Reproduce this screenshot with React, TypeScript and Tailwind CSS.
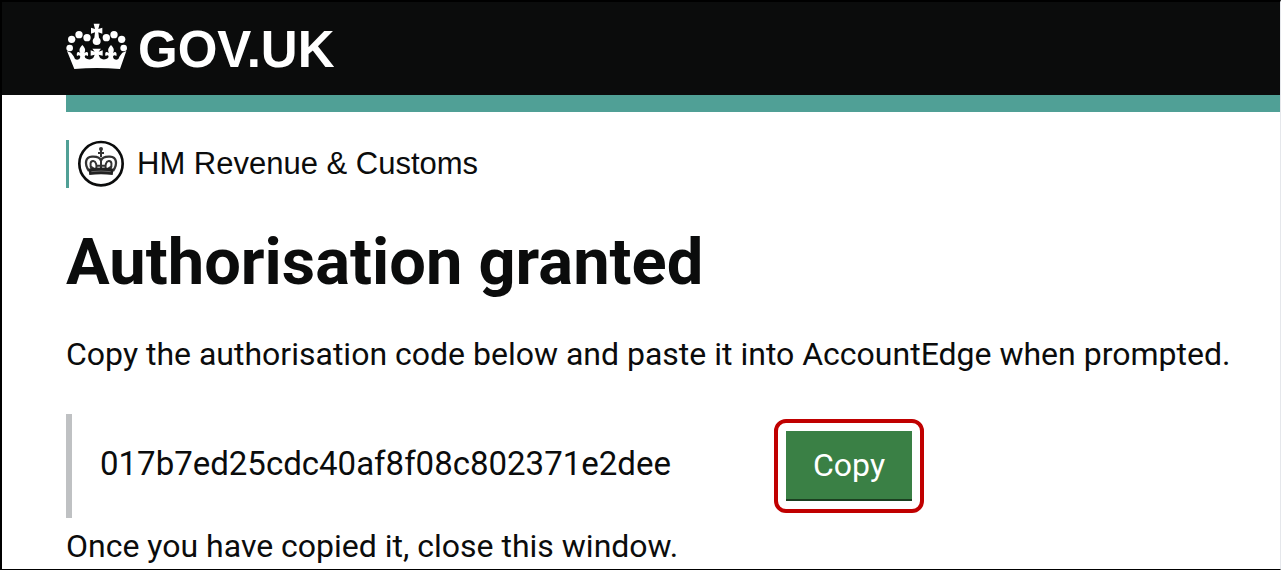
import React, { useState } from "react";

const AUTHORISATION_CODE = "017b7ed25cdc40af8f08c802371e2dee";

function CrownLogo() {
  return (
    <svg viewBox="18 11 186 144" className="h-12 w-[62px]" fill="currentColor" aria-hidden="true">
      {/* Pearls along the arches */}
      <circle cx="29" cy="89" r="10" />
      <circle cx="35" cy="63" r="11" />
      <circle cx="57" cy="49" r="11" />
      <circle cx="81" cy="58" r="11" />
      <circle cx="139" cy="58" r="11" />
      <circle cx="162" cy="49" r="11" />
      <circle cx="185" cy="63" r="11" />
      <circle cx="191" cy="89" r="10" />
      {/* Cross and orb */}
      <path d="M101 16h18l-4 16 12-4v18l-12-4 2 16c3 3 5 6 5 10a12 12 0 0 1-24 0c0-4 2-7 5-10l2-16-12 4V28l12 4z" />
      {/* Base with fleurs */}
      <path d="M21 98l12 5 8 11 4 8c6 4 12 2 15-3 2-5 0-8-4-8-3 0-5 3-5 3-2-8 0-14 5-13l5 3c-5-9-2-16 6-24 8 8 11 15 6 24l6-3c5-1 7 5 4 13 0 0-2-3-5-3-4 0-5 4-2 8 7 6 20 6 25-2l3-8-12 3V96l12 4-7-9h26l-7 9 12-4v16l-12-3 3 8c5 8 18 8 25 2 3-4 2-8-2-8-3 0-5 3-5 3-3-8-1-14 4-13l6 3c-5-9-2-16 6-24 8 8 11 15 6 24l5-3c5-1 7 5 5 13 0 0-2-3-5-3-4 0-6 3-4 8 3 5 9 7 15 3l4-8 8-11 12-5-19 54Q110 146 43 152z" />
    </svg>
  );
}

function DepartmentCrest() {
  return (
    <svg viewBox="21 12 144 144" className="h-12 w-12" fill="none" stroke="currentColor" aria-hidden="true">
      <circle cx="93" cy="83" r="65" strokeWidth="8" />
      <g stroke="#333">
        <circle cx="93" cy="39" r="6" fill="#333" stroke="none" />
        <path d="M93 42v22M84 51h18" strokeWidth="6" />
        <path d="M57 105C42 83 46 63 66 62c15-1 24 3 27 12 3-9 12-13 27-12 20 1 24 21 9 43" strokeWidth="7" />
        <path d="M66 101c-8-15-5-27 4-26 8 1 11 13 9 25M120 101c8-15 5-27-4-26-8 1-11 13-9 25M93 70v30M82 89h22M60 90l11 8M126 90l-11 8" strokeWidth="6" />
        <path d="M55 98q38-7 76 0l-3 19q-35-5-70 0z" fill="#222" stroke="none" />
        <path d="M64 107q29-4 58 0" stroke="#888" strokeWidth="2" />
      </g>
    </svg>
  );
}

export default function App() {
  const [copied, setCopied] = useState(false);

  const copyCode = () => {
    navigator.clipboard?.writeText(AUTHORISATION_CODE);
    setCopied(true);
  };

  return (
    <div className="min-h-screen border-t-2 border-r border-b border-l-2 border-black border-r-gray-200 bg-white font-[Roboto,'Liberation_Sans',sans-serif] text-[32px] leading-10 text-[#0b0c0c]">
      <header className="bg-[#0b0c0c] pt-5 pb-[17px] pl-16 text-white">
        <a href="#" className="flex w-fit items-start gap-2.5">
          <CrownLogo />
          <span className="font-['Liberation_Sans',Arial,sans-serif] text-[51px] leading-14 font-bold">GOV.UK</span>
        </a>
      </header>

      <main className="pl-16">
        <div className="h-[17px] bg-[#50a096]" />

        <div className="mt-7 flex items-center border-l-3 border-[#50a096] pl-2">
          <DepartmentCrest />
          <span className="pl-3 font-['Liberation_Sans',Arial,sans-serif] text-[31px]">HM Revenue &amp; Customs</span>
        </div>

        <h1 className="mt-[38px] text-[65px] leading-[72px] font-bold">Authorisation granted</h1>

        <p className="mt-9">Copy the authorisation code below and paste it into AccountEdge when prompted.</p>

        <div className="mt-10 flex h-[104px] items-center border-l-6 border-[#bfc1c3] pl-7">
          <code className="w-[674px] pb-1 font-[Roboto,'Liberation_Sans',sans-serif] text-[33px]">
            {AUTHORISATION_CODE}
          </code>
          <div className="rounded-xl border-4 border-[#c00000] p-2">
            <button
              type="button"
              onClick={copyCode}
              aria-pressed={copied}
              className="block border-b-2 border-[#1b3f20] bg-[#3a8045] px-[27px] py-3.5 text-white"
            >
              Copy
            </button>
          </div>
        </div>

        <p className="mt-2">Once you have copied it, close this window.</p>
      </main>
    </div>
  );
}
